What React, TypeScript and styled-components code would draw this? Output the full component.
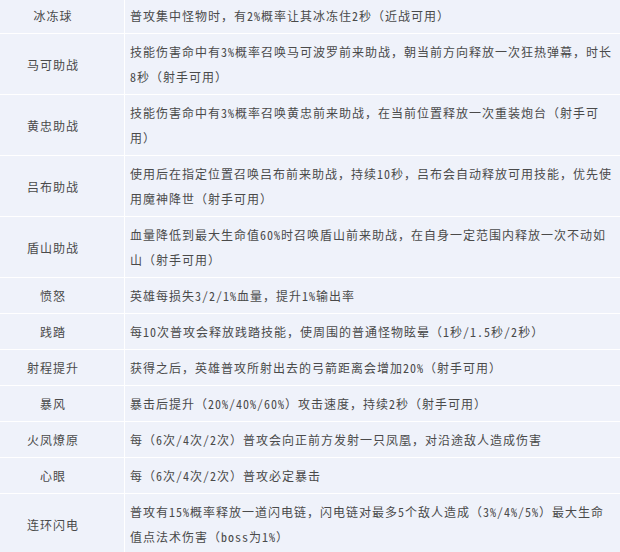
import React from 'react';
import styled, { createGlobalStyle } from 'styled-components';

interface SkillRow {
  name: string;
  desc: string;
}

const rows: SkillRow[] = [
  { name: '冰冻球', desc: '普攻集中怪物时，有2%概率让其冰冻住2秒（近战可用）' },
  {
    name: '马可助战',
    desc: '技能伤害命中有3%概率召唤马可波罗前来助战，朝当前方向释放一次狂热弹幕，时长8秒（射手可用）',
  },
  {
    name: '黄忠助战',
    desc: '技能伤害命中有3%概率召唤黄忠前来助战，在当前位置释放一次重装炮台（射手可用）',
  },
  {
    name: '吕布助战',
    desc: '使用后在指定位置召唤吕布前来助战，持续10秒，吕布会自动释放可用技能，优先使用魔神降世（射手可用）',
  },
  {
    name: '盾山助战',
    desc: '血量降低到最大生命值60%时召唤盾山前来助战，在自身一定范围内释放一次不动如山（射手可用）',
  },
  { name: '愤怒', desc: '英雄每损失3/2/1%血量，提升1%输出率' },
  { name: '践踏', desc: '每10次普攻会释放践踏技能，使周围的普通怪物眩晕（1秒/1.5秒/2秒）' },
  { name: '射程提升', desc: '获得之后，英雄普攻所射出去的弓箭距离会增加20%（射手可用）' },
  { name: '暴风', desc: '暴击后提升（20%/40%/60%）攻击速度，持续2秒（射手可用）' },
  { name: '火凤燎原', desc: '每（6次/4次/2次）普攻会向正前方发射一只凤凰，对沿途敌人造成伤害' },
  { name: '心眼', desc: '每（6次/4次/2次）普攻必定暴击' },
  {
    name: '连环闪电',
    desc: '普攻有15%概率释放一道闪电链，闪电链对最多5个敌人造成（3%/4%/5%）最大生命值点法术伤害（boss为1%）',
  },
];

const GlobalStyle = createGlobalStyle`
  html, body {
    margin: 0;
    padding: 0;
    background: #ffffff;
    overflow: hidden;
  }
`;

// the screenshot is a crop of a wider table, so the grid sticks out top/left a little
const SkillTable = styled.div`
  display: grid;
  grid-template-columns: 142px 495px;
  gap: 1px;
  margin: -2px 0 0 -18px;
  background: #ffffff;
  font-family: 'Noto Sans CJK SC', 'Noto Sans', sans-serif;
  font-size: 12px;
  letter-spacing: 1px;
  line-height: 25px;
  color: #4a4a4a;
`;

const Cell = styled.div<{ $center?: boolean }>`
  display: flex;
  align-items: center;
  justify-content: ${props => (props.$center ? 'center' : 'flex-start')};
  text-align: ${props => (props.$center ? 'center' : 'left')};
  padding: 5px;
  background: #eff2fa;
`;

const Desc = styled.span`
  line-break: strict;
`;

// ascii runs use the half-width forms, like the old song-style page font
const Latin = styled.span`
  font-feature-settings: 'hwid' 1;
`;

const splitLatin = (text: string) => text.split(/([\x20-\x7e]+)/).filter(Boolean);

const App: React.FC = () => {
  return (
    <>
      <GlobalStyle />
      <SkillTable>
        {rows.map(row => (
          <React.Fragment key={row.name}>
            <Cell $center>{row.name}</Cell>
            <Cell>
              <Desc>
                {splitLatin(row.desc).map((part, i) =>
                  /^[\x20-\x7e]+$/.test(part) ? <Latin key={i}>{part}</Latin> : part,
                )}
              </Desc>
            </Cell>
          </React.Fragment>
        ))}
      </SkillTable>
    </>
  );
};

export default App;
